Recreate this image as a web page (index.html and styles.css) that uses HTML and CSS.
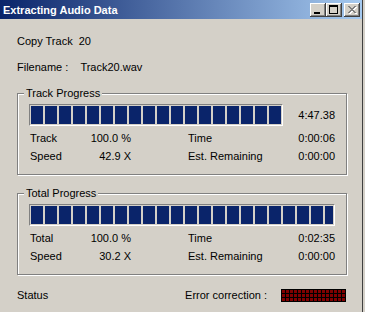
FILE: index.html
```html
<!DOCTYPE html>
<html lang="en">
<head>
    <meta charset="UTF-8">
    <title>Extracting Audio Data</title>
    <link rel="stylesheet" href="styles.css">
</head>
<body>
    <div class="window">
        <div class="caption">
            <span class="caption-text">Extracting Audio Data</span>
            <div class="caption-buttons">
                <span class="cap-btn">
                    <svg width="16" height="14" viewBox="0 0 16 14" shape-rendering="crispEdges"><rect x="4" y="9" width="6" height="2" fill="#000"/></svg>
                </span>
                <span class="cap-btn">
                    <svg width="16" height="14" viewBox="0 0 16 14" shape-rendering="crispEdges" fill="#000">
                        <rect x="3" y="2" width="9" height="2"/><rect x="3" y="2" width="1" height="9"/>
                        <rect x="11" y="2" width="1" height="9"/><rect x="3" y="10" width="9" height="1"/>
                    </svg>
                </span>
                <span class="cap-btn close">
                    <svg width="16" height="14" viewBox="0 0 16 14" shape-rendering="crispEdges">
                        <defs>
                            <path id="xg" d="M4 3h2v1h-2z M10 3h2v1h-2z M5 4h2v1h-2z M9 4h2v1h-2z M6 5h4v1h-4z M7 6h2v1h-2z M6 7h4v1h-4z M5 8h2v1h-2z M9 8h2v1h-2z M4 9h2v1h-2z M10 9h2v1h-2z"/>
                        </defs>
                        <use href="#xg" fill="#fff" transform="translate(1,1)"/>
                        <use href="#xg" fill="#808080"/>
                    </svg>
                </span>
            </div>
        </div>

        <div class="content">
            <p class="info">Copy Track  20</p>
            <p class="info">Filename :    Track20.wav</p>

            <fieldset class="group">
                <legend>Track Progress</legend>
                <div class="bar-row">
                    <div class="bar short"><div class="fill"></div></div>
                    <span class="bar-time">4:47.38</span>
                </div>
                <div class="stats">
                    <span>Track</span><span class="num">100.0 %</span><span class="name2">Time</span><span class="num">0:00:06</span>
                    <span>Speed</span><span class="num">42.9 X</span><span class="name2">Est. Remaining</span><span class="num">0:00:00</span>
                </div>
            </fieldset>

            <fieldset class="group">
                <legend>Total Progress</legend>
                <div class="bar-row">
                    <div class="bar"><div class="fill"></div></div>
                </div>
                <div class="stats">
                    <span>Total</span><span class="num">100.0 %</span><span class="name2">Time</span><span class="num">0:02:35</span>
                    <span>Speed</span><span class="num">30.2 X</span><span class="name2">Est. Remaining</span><span class="num">0:00:00</span>
                </div>
            </fieldset>

            <div class="status">
                <span>Status</span>
                <div class="error-corr">
                    <span>Error correction :</span>
                    <div class="led"></div>
                </div>
            </div>
        </div>
    </div>
</body>
</html>
```

FILE: styles.css
```css
html {
    background: #d4d0c8;
}

body {
    margin: 0;
    font-family: 'Liberation Sans', Arial, sans-serif;
    font-size: 11px;
    color: #000;
}

.window {
    width: 362px;
    height: 312px;
    background: #d4d0c8;
    border-right: 1px solid #404040;
}

/* title bar */
.caption {
    display: flex;
    align-items: flex-start;
    height: 19px;
    padding: 0 2px 0 3px;
    background: linear-gradient(90deg, #0a246a, #a6caf0);
}

.caption-text {
    padding-top: 4px;
    line-height: 13px;
    font-weight: bold;
    color: #fff;
}

.caption-buttons {
    display: flex;
    margin: 3px 0 0 auto;
}

.cap-btn {
    width: 16px;
    height: 14px;
    background: #d4d0c8;
    box-shadow: inset -1px -1px #404040, inset 1px 1px #fff, inset -2px -2px #808080;
}

.cap-btn svg {
    display: block;
}

.cap-btn.close {
    margin-left: 2px;
}

/* body */
.content {
    padding: 16px 0 0 17px;
}

.info {
    margin: 0 0 13px 0;
    line-height: 13px;
    white-space: pre;
}

.group {
    width: 330px;
    box-sizing: border-box;
    margin: 11px 0 0 0;
    padding: 4px 11px 9px 11px;
    border: 1px solid #808080;
    box-shadow: inset 1px 1px #fff, 1px 1px #fff;
    min-inline-size: 0;
}

.group + .group {
    margin-top: 12px;
}

.group legend {
    margin-left: -5px;
    padding: 0 2px;
    line-height: 13px;
    background: #d4d0c8;
}

.bar-row {
    display: flex;
    align-items: center;
}

.bar {
    flex: 1;
    height: 22px;
    box-sizing: border-box;
    padding: 1px;
    border: 1px solid;
    border-color: #808080 #fff #fff #808080;
}

.bar.short {
    flex: none;
    width: 254px;
}

.fill {
    height: 100%;
    background: repeating-linear-gradient(90deg, #0a246a 0 12px, transparent 12px 14px);
}

.bar-time {
    margin-left: auto;
}

.stats {
    display: grid;
    grid-template-columns: 50px 51px 1fr auto;
    margin-top: 3px;
    padding-left: 1px;
    line-height: 18px;
}

.stats .num {
    text-align: right;
}

.stats .name2 {
    padding-left: 57px;
}

/* status line */
.status {
    display: flex;
    align-items: center;
    width: 329px;
    margin-top: 14px;
    line-height: 13px;
}

.error-corr {
    display: flex;
    align-items: center;
    gap: 14px;
    margin-left: auto;
}

.led {
    width: 65px;
    height: 13px;
    background-color: #800000;
    background-image:
        repeating-linear-gradient(90deg, #000 0 1px, transparent 1px 4px),
        repeating-linear-gradient(180deg, #000 0 1px, transparent 1px 4px);
}
```
